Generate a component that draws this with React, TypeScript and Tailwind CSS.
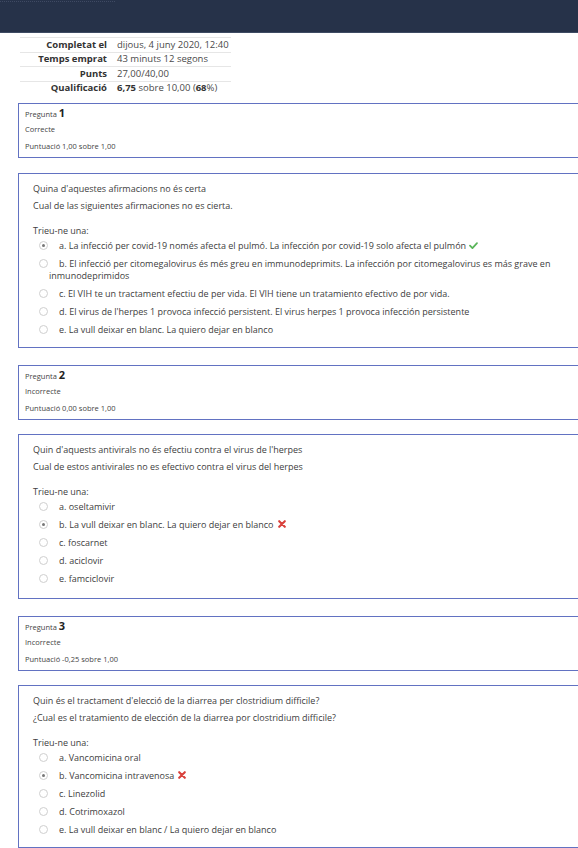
import React from "react";

const Radio = ({ checked }: { checked?: boolean }) => (
  <span className="relative inline-block w-[9px] h-[9px] rounded-full border border-[#cfcfcf] bg-white align-[-1px] mr-[11px] [text-indent:0]">
    {checked && <span className="absolute left-[2px] top-[2px] w-[3px] h-[3px] rounded-full bg-[#777]" />}
  </span>
);

const Check = () => (
  <svg width="9" height="7" viewBox="0 0 10 8" className="inline-block ml-[3px] align-[0px]">
    <path d="M1 4.2 L3.8 7 L9 1.3" fill="none" stroke="#5ab55a" strokeWidth="2" strokeLinecap="round" strokeLinejoin="round" />
  </svg>
);

const Cross = () => (
  <svg width="8" height="8" viewBox="0 0 10 10" className="inline-block ml-[4px] align-[0px]">
    <path d="M1.5 1.5 L8.5 8.5 M8.5 1.5 L1.5 8.5" fill="none" stroke="#d9413c" strokeWidth="2.6" strokeLinecap="round" />
  </svg>
);

type Opt = { t: string; checked?: boolean; mark?: "ok" | "bad" };

const Info = ({ n, state, score }: { n: number; state: string; score: string }) => (
  <div className="ml-[18px] w-[600px] h-[55px] border border-[#6272c2] pl-[6px] pt-[2px] text-[7.5px] text-[#444] leading-[15px]">
    <div className="leading-[14px]">
      Pregunta <span className="text-[11px] font-bold text-[#222]">{n}</span>
    </div>
    <div className="mt-[1px]">{state}</div>
    <div className="mt-[2px]">{score}</div>
  </div>
);

const Content = ({ q1, q2, opts, h }: { q1: string; q2: string; opts: Opt[]; h: string }) => (
  <div className={`ml-[18px] w-[575px] border border-[#6272c2] pl-[14px] pr-[30px] pt-[6px] text-[9px] text-[#404040] ${h}`}>
    <div className="leading-[17px]">{q1}</div>
    <div className="leading-[17px]">{q2}</div>
    <div className="leading-[17px] mt-[8px]">Trieu-ne una:</div>
    <div className="pl-[16px] -mt-[2px]">
      {opts.map((o, i) => (
        <div key={i} className="[text-indent:-10px] leading-[12px] py-[3px]">
          <Radio checked={o.checked} />
          {o.t}
          {o.mark === "ok" && <Check />}
          {o.mark === "bad" && <Cross />}
        </div>
      ))}
    </div>
  </div>
);

export default function App() {
  return (
    <div className="w-[578px] h-[848px] overflow-hidden bg-white font-['Open_Sans',sans-serif]">
      <div className="h-[33px] bg-[#263249] border-b border-[#3e4b63] relative">
        <div className="absolute left-0 top-[1px] w-[115px] h-[2px] border-t border-dotted border-[#3f4a63]" />
      </div>
      <div className="ml-[20px] w-[211px] text-[9.5px]">
        <div className="h-[4px]" />
        {[
          ["Completat el", <>dijous, 4 juny 2020, 12:40</>],
          ["Temps emprat", <>43 minuts 12 segons</>],
          ["Punts", <>27,00/40,00</>],
          [
            "Qualificació",
            <>
              <b className="text-[#333]">6,75</b> sobre 10,00 (<b className="text-[#333]">68</b>%)
            </>,
          ],
        ].map(([l, v], i) => (
          <div key={i} className="flex h-[14.5px] items-center border-t border-[#e6e6e6]">
            <div className="w-[91px] text-right pr-[4px] font-bold text-[#333] whitespace-nowrap">{l}</div>
            <div className="pl-[6px] text-[#4a4a4a] whitespace-nowrap">{v}</div>
          </div>
        ))}
      </div>
      <div className="h-[8px]" />
      <Info n={1} state="Correcte" score="Puntuació 1,00 sobre 1,00" />
      <div className="h-[15px]" />
      <Content
        h="h-[175px]"
        q1="Quina d'aquestes afirmacions no és certa"
        q2="Cual de las siguientes afirmaciones no es cierta."
        opts={[
          { t: "a. La infecció per covid-19 només afecta el pulmó.  La infección por covid-19 solo afecta el pulmón", checked: true, mark: "ok" },
          { t: "b. El infecció per citomegalovirus és més greu en immunodeprimits. La infección por citomegalovirus es más grave en inmunodeprimidos" },
          { t: "c. El VIH te un tractament efectiu de per vida. El VIH tiene un tratamiento efectivo de por vida." },
          { t: "d. El virus de l'herpes 1 provoca infecció persistent. El virus herpes 1 provoca infección persistente" },
          { t: "e. La vull deixar en blanc. La quiero dejar en blanco" },
        ]}
      />
      <div className="h-[17px]" />
      <Info n={2} state="Incorrecte" score="Puntuació 0,00 sobre 1,00" />
      <div className="h-[14px]" />
      <Content
        h="h-[165px]"
        q1="Quin d'aquests antivirals no és efectiu contra el virus de l'herpes"
        q2="Cual de estos antivirales no es efectivo contra el virus del herpes"
        opts={[
          { t: "a. oseltamivir" },
          { t: "b. La vull deixar en blanc. La quiero dejar en blanco", checked: true, mark: "bad" },
          { t: "c. foscarnet" },
          { t: "d. aciclovir" },
          { t: "e. famciclovir" },
        ]}
      />
      <div className="h-[17px]" />
      <Info n={3} state="Incorrecte" score="Puntuació -0,25 sobre 1,00" />
      <div className="h-[14px]" />
      <Content
        h="h-[163px]"
        q1="Quin és el tractament d'elecció de la diarrea per clostridium difficile?"
        q2="¿Cual es el tratamiento de elección de la diarrea por clostridium difficile?"
        opts={[
          { t: "a. Vancomicina oral" },
          { t: "b. Vancomicina intravenosa", checked: true, mark: "bad" },
          { t: "c. Linezolid" },
          { t: "d. Cotrimoxazol" },
          { t: "e. La vull deixar en blanc / La quiero dejar en blanco" },
        ]}
      />
    </div>
  );
}
